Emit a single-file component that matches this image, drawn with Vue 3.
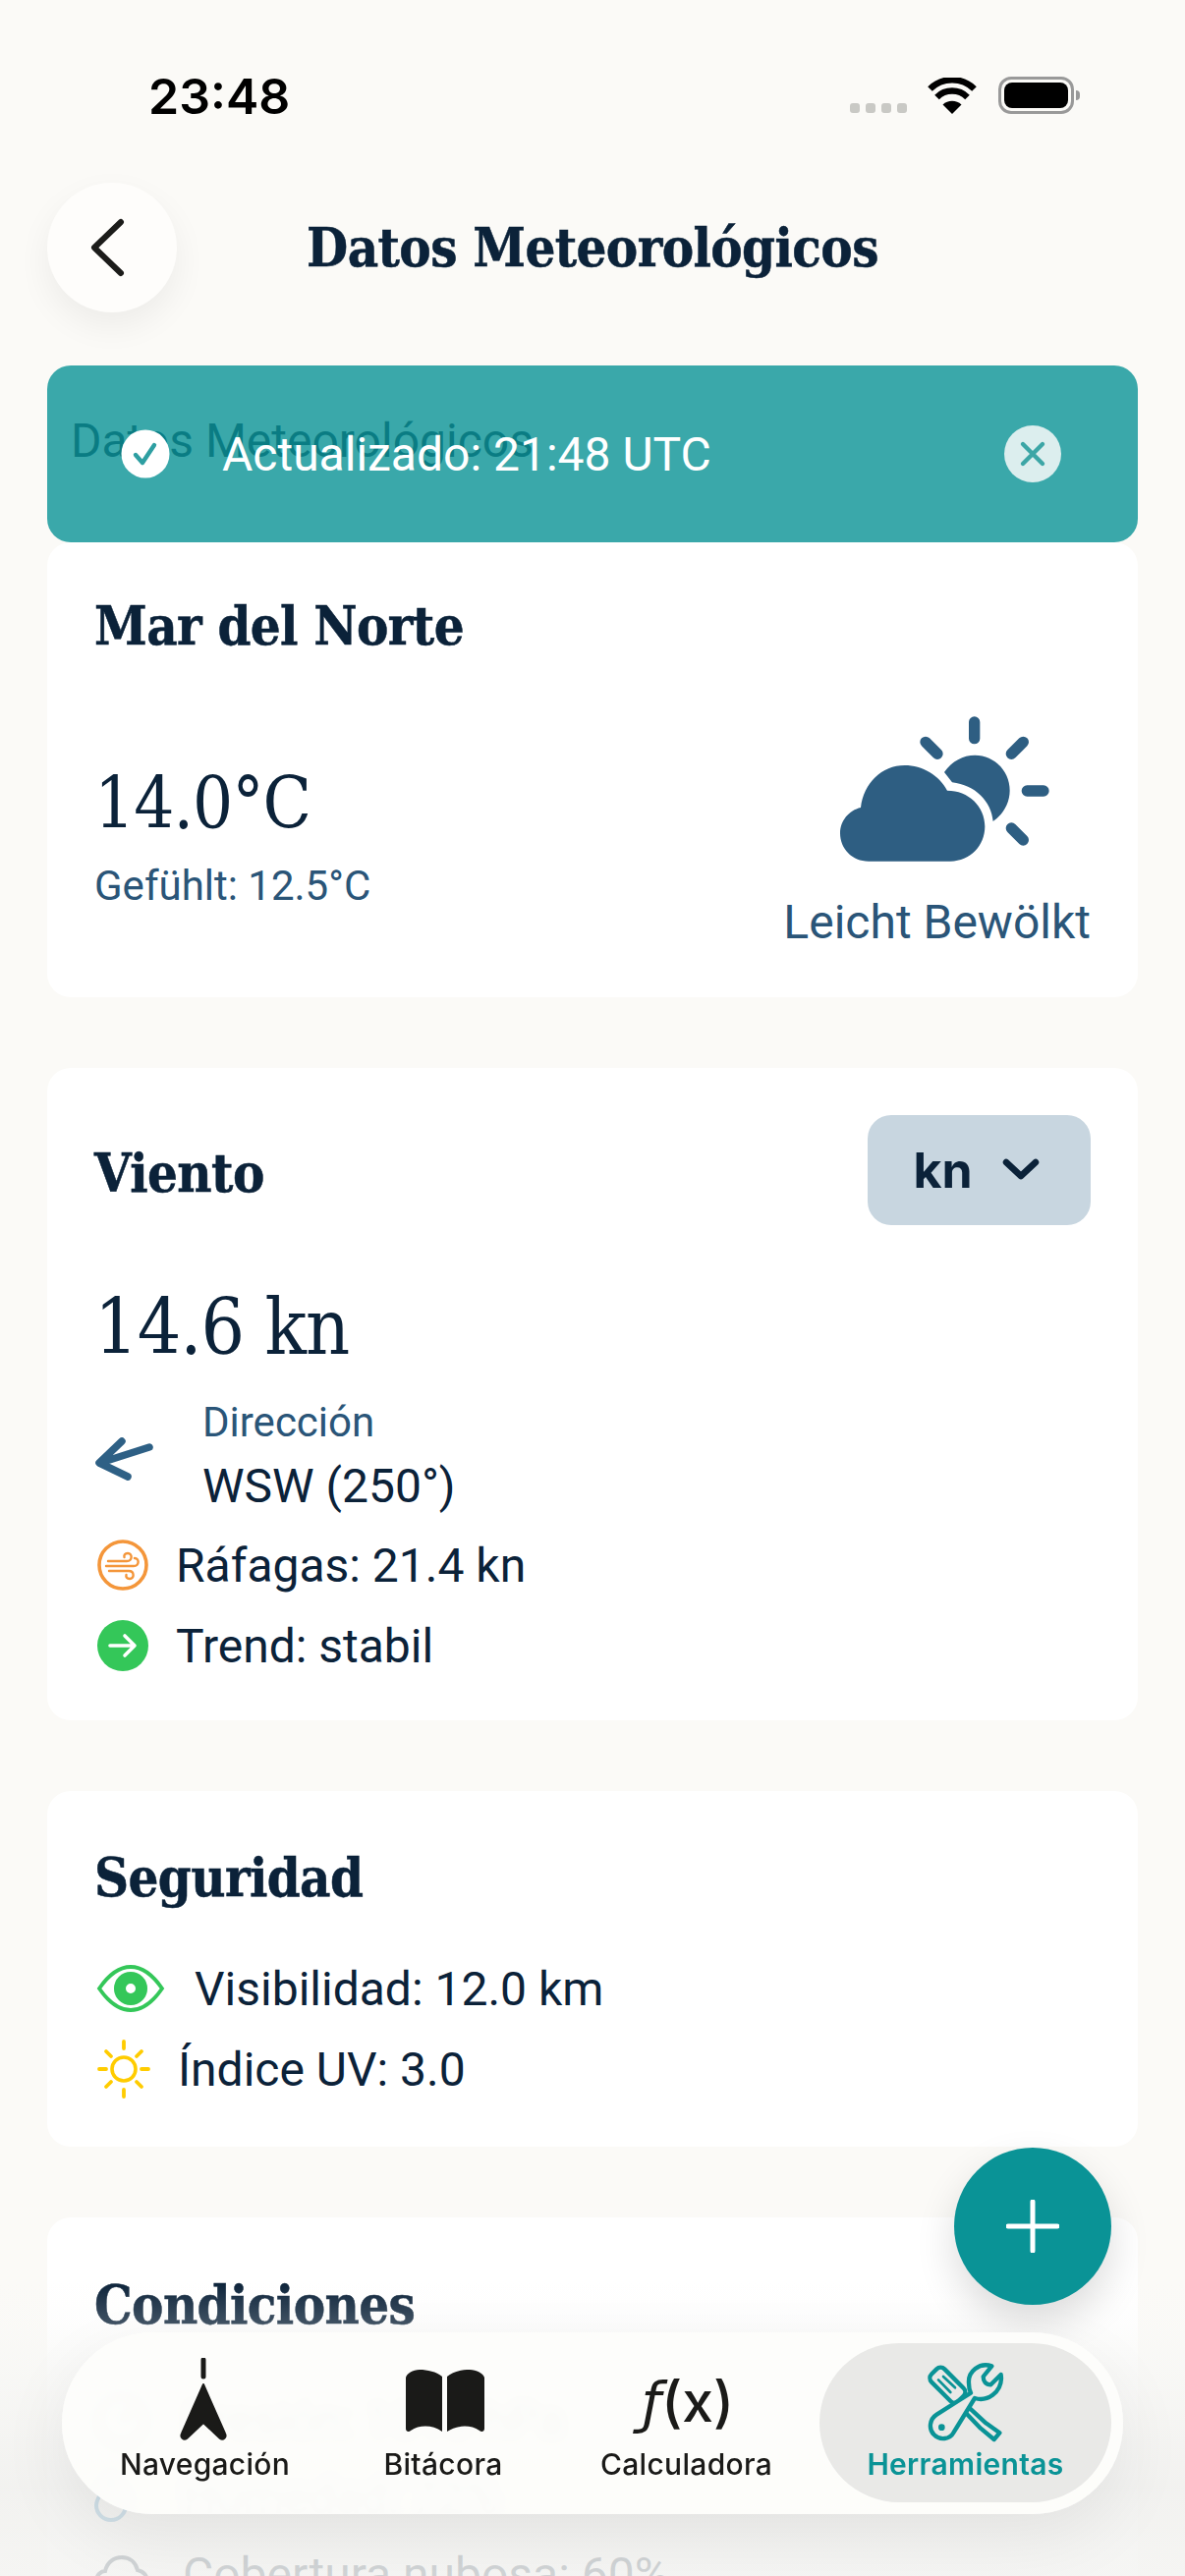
<script setup>
const navItems = [
  { key: 'pos', label: 'Navegación' },
  { key: 'book', label: 'Bitácora' },
  { key: 'calc', label: 'Calculadora' },
  { key: 'tools', label: 'Herramientas', active: true },
]
</script>

<template>
  <div class="page">
    <div class="status">
      <span class="time">23:48</span>
      <div class="status-icons">
        <div class="dots"><i></i><i></i><i></i><i></i></div>
        <svg class="wifi" width="50" height="37" viewBox="0 0 50 37">
          <path d="M25 37 L15.5 27.5 A14 14 0 0 1 34.5 27.5 Z" fill="#000" />
          <path d="M9.5 20 A22 22 0 0 1 40.5 20" fill="none" stroke="#000" stroke-width="6.5" />
          <path d="M2.5 11.5 A32 32 0 0 1 47.5 11.5" fill="none" stroke="#000" stroke-width="6.5" />
        </svg>
        <div class="battery"><div class="battery-fill"></div><div class="battery-nub"></div></div>
      </div>
    </div>

    <header class="header">
      <button class="back">
        <svg width="40" height="62" viewBox="0 0 40 62"><path d="M34 5 L7 31 L34 57" fill="none" stroke="#1c1c1a" stroke-width="6" stroke-linecap="round" stroke-linejoin="round" /></svg>
      </button>
      <h1 class="title slab-b">Datos Meteorológicos</h1>
    </header>

    <h2 class="page-heading">Datos Meteorológicos</h2>

    <main class="cards">
      <section class="card weather">
        <h3 class="card-title slab-b">Mar del Norte</h3>
        <div class="weather-row">
          <div class="temp-col">
            <div class="big slab-r">14.0°C</div>
            <div class="feels">Gefühlt: 12.5°C</div>
          </div>
          <div class="cond-col">
            <svg width="215" height="152" viewBox="460 122 645 456">
              <path fill="#2E5E82" d="M550 568 C500 568 463 530 463 482 C463 445 490 412 526 404 C535 330 590 275 660 275 C715 275 765 305 790 352 C855 352 905 400 905 462 C905 520 860 568 800 568 Z" />
              <path fill="#2E5E82" d="M781 296 C805 262 838 244 875 244 C933 244 981 292 981 352 C981 390 960 425 930 446 C925 385 875 335 805 327 Z" />
              <g stroke="#2E5E82" stroke-width="34" stroke-linecap="round">
                <path d="M873 143 V193 M1034 353 H1084 M724 204 L760 240 M1022 204 L986 240 M986 467 L1022 503" />
              </g>
            </svg>
            <div class="cond-label">Leicht Bewölkt</div>
          </div>
        </div>
      </section>

      <section class="card wind">
        <div class="wind-head">
          <h3 class="card-title slab-b">Viento</h3>
          <button class="unit">
            <span>kn</span>
            <svg width="38" height="24" viewBox="0 0 38 24"><path d="M4 4 L19 18 L34 4" fill="none" stroke="#0B2239" stroke-width="6.5" stroke-linecap="round" stroke-linejoin="round" /></svg>
          </button>
        </div>
        <div class="big slab-r wind-speed">14.6 kn</div>
        <div class="dir">
          <svg class="dir-icon" width="60" height="56" viewBox="0 0 60 56">
            <path d="M56 14 L6 30 M28 8 L5 30 L34 44" fill="none" stroke="#2E6085" stroke-width="7.5" stroke-linecap="round" stroke-linejoin="round" />
          </svg>
          <div>
            <div class="dir-label">Dirección</div>
            <div class="dir-value">WSW (250°)</div>
          </div>
        </div>
        <div class="row gust">
          <svg width="52" height="52" viewBox="0 0 52 52" fill="none" stroke="#F4963A">
            <circle cx="26" cy="26" r="24" stroke-width="3.6" />
            <g stroke-width="2.4" stroke-linecap="round">
              <path d="M11 22 H30 C36 22 36 14 31 14 C28 14 27 16 27.5 18" />
              <path d="M9 27 H37 C43 27 43 19 38 19" />
              <path d="M12 32 H32 C38 32 38 40 33 40 C30 40 29 38 29.5 36" />
            </g>
          </svg>
          <span>Ráfagas: 21.4 kn</span>
        </div>
        <div class="row trend">
          <svg width="52" height="52" viewBox="0 0 52 52">
            <circle cx="26" cy="26" r="26" fill="#34C759" />
            <path d="M13 26 H38 M28 16 L38 26 L28 36" fill="none" stroke="#fff" stroke-width="3.6" stroke-linecap="round" stroke-linejoin="round" />
          </svg>
          <span>Trend: stabil</span>
        </div>
      </section>

      <section class="card safety">
        <h3 class="card-title slab-b">Seguridad</h3>
        <div class="row vis">
          <svg width="70" height="50" viewBox="0 0 70 50">
            <path d="M3 25 C14 9 25 3 35 3 C45 3 56 9 67 25 C56 41 45 47 35 47 C25 47 14 41 3 25 Z" fill="none" stroke="#34C759" stroke-width="3.8" />
            <circle cx="35" cy="25" r="11" fill="none" stroke="#34C759" stroke-width="12" />
          </svg>
          <span>Visibilidad: 12.0 km</span>
        </div>
        <div class="row uv">
          <svg width="54" height="62" viewBox="0 0 54 62" fill="none" stroke="#FFCC00" stroke-linecap="round">
            <circle cx="27" cy="31" r="12" stroke-width="3.6" />
            <path stroke-width="3.8" d="M27 3 V10 M27 52 V59 M2 31 H9 M45 31 H52 M9 13 L14 18 M45 13 L40 18 M9 49 L14 44 M45 49 L40 44" />
          </svg>
          <span>Índice UV: 3.0</span>
        </div>
      </section>

      <section class="card conditions">
        <h3 class="card-title slab-b">Condiciones</h3>
        <div class="row cond-row">
          <svg width="56" height="56" viewBox="0 0 56 56" fill="none" stroke="#2E86C1" stroke-width="4">
            <circle cx="28" cy="28" r="24" />
            <path d="M28 28 L40 16" stroke-linecap="round" />
          </svg>
          <span>Presión: 1013 hPa</span>
        </div>
        <div class="row cond-row">
          <svg width="56" height="56" viewBox="0 0 56 56" fill="none" stroke="#2E86C1" stroke-width="4">
            <path d="M17 6 C24 20 32 28 32 36 A15 15 0 0 1 2 36 C2 28 10 20 17 6 Z" />
          </svg>
          <span>Humedad: 72%</span>
        </div>
        <div class="row cond-row">
          <svg width="56" height="42" viewBox="0 0 56 42" fill="none" stroke="#0B2239" stroke-width="4">
            <path d="M14 38 C6 38 2 33 2 27 C2 21 7 17 11 17 C13 8 20 3 28 3 C36 3 42 8 44 16 C50 17 54 22 54 28 C54 34 49 38 44 38 Z" />
          </svg>
          <span>Cobertura nubosa: 60%</span>
        </div>
      </section>
    </main>

    <div class="fade"></div>

    <div class="toast">
      <svg width="50" height="50" viewBox="0 0 50 50">
        <circle cx="25" cy="25" r="24.5" fill="#fff" />
        <path d="M15 26 L22 34 L34 16" fill="none" stroke="#2E9FA2" stroke-width="4.4" stroke-linecap="round" stroke-linejoin="round" />
      </svg>
      <span class="toast-text">Actualizado: 21:48 UTC</span>
      <svg class="toast-close" width="58" height="58" viewBox="0 0 58 58">
        <circle cx="29" cy="29" r="29" fill="#DCEEEE" />
        <path d="M19 19 L39 39 M39 19 L19 39" stroke="#3CA6A6" stroke-width="4.4" stroke-linecap="round" />
      </svg>
    </div>

    <button class="fab">
      <svg width="54" height="54" viewBox="0 0 54 54"><path d="M27 2 V52 M2 27 H52" stroke="#fff" stroke-width="5" stroke-linecap="round" /></svg>
    </button>

    <nav class="nav">
      <div v-for="item in navItems" :key="item.key" class="nav-item" :class="['item-' + item.key, { active: item.active }]">
        <div class="nav-icon">
          <svg v-if="item.key === 'pos'" class="icon-pos" width="54" height="84" viewBox="0 0 54 84">
            <path d="M27 2 V19" stroke="#1a1a18" stroke-width="5" stroke-linecap="round" />
            <path d="M27 27 L49 77 C51 81 47 84 44 82 L27 66 L10 82 C7 84 3 81 5 77 Z" fill="#1a1a18" stroke="#1a1a18" stroke-width="2" stroke-linejoin="round" />
          </svg>
          <svg v-else-if="item.key === 'book'" class="icon-book" width="80" height="64" viewBox="0 0 80 64">
            <path fill="#1a1a18" d="M37 7 C31 2 22 0 14 0 C7 0 1 4 0 8 V60 C0 63 3 64 5 62 C14 56 27 56 37 63 Z" />
            <path fill="#1a1a18" d="M42 7 C48 2 57 0 65 0 C72 0 79 4 80 8 V60 C80 63 77 64 75 62 C66 56 53 56 42 63 Z" />
          </svg>
          <div v-else-if="item.key === 'calc'" class="fx"><i>ƒ</i>(x)</div>
          <svg v-else width="82" height="82" viewBox="970 135 238 246" fill="none" stroke="#0A9396" stroke-width="13" stroke-linecap="round" stroke-linejoin="round">
            <rect x="-58" y="-28" width="116" height="56" rx="17" transform="translate(1033 206) rotate(45)" />
            <path stroke-width="8" d="M1005 190 L1042 228 M1020 180 L1056 214" />
            <path d="M1098 274 L1150 322 M1086 288 L1134 338 M1150 322 L1192 352 L1175 372 L1134 338" />
            <path fill="#E9E9E7" d="M1168 148 C1130 135 1095 165 1098 200 C1098 213 1100 222 1104 230 L1000 296 C978 310 974 340 992 358 C1010 376 1040 372 1052 350 L1116 246 C1155 258 1196 228 1197 186 L1196 174 L1165 205 C1150 205 1142 195 1142 180 Z" />
            <circle cx="1015" cy="335" r="6" fill="#0A9396" stroke-width="8" />
          </svg>
        </div>
        <span class="nav-label">{{ item.label }}</span>
      </div>
    </nav>
  </div>
</template>

<style>
html, body { margin: 0; background: #FBFAF7; }
</style>

<style scoped>
.page {
  position: relative;
  width: 1206px;
  height: 2622px;
  overflow: hidden;
  background: #FBFAF7;
  font-family: Roboto, "Liberation Sans", sans-serif;
  color: #0B2239;
}
.slab-b { font-family: "DejaVu Serif", "Liberation Serif", serif; font-stretch: condensed; font-weight: 700; -webkit-text-stroke: .5px currentColor; }
.slab-r { font-family: "DejaVu Serif", "Liberation Serif", serif; font-stretch: condensed; font-weight: 400; }

.status { height: 186px; display: flex; justify-content: space-between; padding: 0 113px 0 151px; box-sizing: border-box; }
.time { font-family: Inter, sans-serif; font-weight: 600; font-size: 50px; line-height: 58px; margin-top: 69px; color: #000; }
.status-icons { display: flex; align-items: flex-start; margin-top: 78px; }
.dots { display: flex; gap: 6px; margin-top: 27px; margin-right: 21px; }
.dots i { width: 10px; height: 10px; border-radius: 3px; background: #C9C9C5; }
.wifi { margin-right: 22px; margin-top: 1px; }
.battery { position: relative; width: 77px; height: 38px; border: 3.5px solid #999; border-radius: 13px; box-sizing: border-box; padding: 3px; }
.battery-fill { width: 100%; height: 100%; background: #000; border-radius: 8px; }
.battery-nub { position: absolute; right: -9px; top: 11px; width: 4px; height: 10px; background: #999; border-radius: 0 4px 4px 0; }

.header { position: relative; height: 132px; padding-left: 48px; display: flex; align-items: center; }
.back { width: 132px; height: 132px; border-radius: 50%; background: #FEFDFB; border: none; padding: 0; display: flex; align-items: center; justify-content: center; box-shadow: 0 14px 34px rgba(0,0,0,.06); }
.back svg { margin-right: 10px; }
.title { position: absolute; left: 0; right: 0; top: 0; bottom: 0; margin: 0; display: flex; align-items: center; justify-content: center; font-size: 54px; letter-spacing: -.6px; color: #0B2239; }

.page-heading { margin: 104px 0 0 72px; font-size: 48px; line-height: 54px; font-weight: 400; color: #0B2239; }

.cards { display: flex; flex-direction: column; gap: 72px; margin: 76px 48px 0; }
.card { background: #fff; border-radius: 24px; padding: 48px; box-sizing: border-box; }
.card-title { margin: 0; font-size: 54px; line-height: 62px; color: #0B2239; letter-spacing: -.6px; }

.weather { height: 463px; padding-top: 54px; }
.weather-row { display: flex; justify-content: space-between; margin-top: 60px; }
.temp-col { padding-top: 45px; }
.big { font-size: 72px; line-height: 90px; letter-spacing: -1px; color: #0B2239; }
.feels { font-size: 42px; line-height: 48px; color: #2A5578; margin-top: 15px; }
.cond-col { display: flex; flex-direction: column; align-items: center; }
.cond-col svg { margin-left: 15px; }
.cond-label { font-size: 48px; line-height: 56px; color: #2A5578; margin-top: 31px; }

.wind { padding-top: 48px; height: 664px; }
.wind-head { display: flex; justify-content: space-between; align-items: center; }
.wind-head .card-title { padding-top: 6px; }
.unit { width: 227px; height: 112px; background: #C8D6E0; border: none; border-radius: 24px; display: flex; align-items: center; justify-content: center; gap: 30px; font-family: Inter, sans-serif; font-weight: 700; font-size: 50px; color: #0B2239; padding: 0 6px 0 0; }
.big.wind-speed { margin-top: 59px; font-size: 78px; }
.dir { display: flex; align-items: center; margin-top: 26px; gap: 50px; }
.dir-icon { margin-top: 8px; }
.dir-label { font-size: 42px; line-height: 52px; color: #2A5578; }
.dir-value { font-size: 48px; line-height: 62px; color: #0B2239; margin-top: 8px; }

.row { display: flex; align-items: center; font-size: 48px; color: #0B2239; }
.gust { margin-top: 19px; gap: 28px; height: 60px; margin-left: 3px; }
.trend { margin-top: 22px; gap: 28px; height: 60px; margin-left: 3px; }

.safety { height: 362px; padding-top: 57px; }
.vis { margin-top: 52px; gap: 30px; height: 60px; margin-left: 2px; }
.uv { margin-top: 21px; gap: 28px; height: 62px; margin-left: 3px; }

.conditions { height: 600px; padding-top: 58px; }
.cond-row { gap: 34px; height: 79px; }
.cond-row:first-of-type { margin-top: 46px; }

.fade { position: absolute; left: 0; right: 0; bottom: 0; height: 300px; background: linear-gradient(to bottom, rgba(248,248,246,0) 0%, rgba(248,248,246,.22) 14%, rgba(247,247,245,.75) 30%, rgba(240,240,238,.82) 70%, rgba(244,244,242,.85) 100%); }

.toast { position: absolute; left: 48px; top: 372px; width: 1110px; height: 180px; box-sizing: border-box; background: rgba(10,147,150,.8); border-radius: 24px; display: flex; align-items: center; padding: 0 78px 0 75px; color: #fff; }
.toast-text { font-size: 48px; margin-left: 53px; flex: 1; }

.fab { position: absolute; left: 971px; top: 2186px; width: 160px; height: 160px; border-radius: 50%; border: none; background: #0A9396; display: flex; align-items: center; justify-content: center; padding: 0; box-shadow: 0 18px 40px rgba(0,0,0,.14); }

.nav { position: absolute; left: 63px; top: 2374px; width: 1080px; height: 185px; box-sizing: border-box; padding: 11px 12px 12px 12px; border-radius: 92px; background: rgba(253,253,251,.93); backdrop-filter: blur(6px); box-shadow: 0 24px 70px rgba(0,0,0,.07); display: grid; grid-template-columns: 264px 224px 271px 297px; }
.nav-item { display: flex; flex-direction: column; align-items: center; color: #1A1A18; }
.nav-item.item-pos .nav-label { margin-left: 3px; }
.nav-item.active { background: #E9E9E7; border-radius: 81px; color: #0A9396; }
.nav-item.active .nav-label { font-weight: 600; }
.nav-icon { height: 101px; display: flex; align-items: flex-end; justify-content: center; }
.icon-pos { margin-bottom: 2px; }
.icon-book { margin-bottom: 10px; margin-left: 3px; }
.nav-label { font-family: Inter, sans-serif; font-size: 30px; letter-spacing: .3px; font-weight: 500; line-height: 34px; margin-top: 5px; white-space: nowrap; }
.fx { font-family: Inter, sans-serif; font-weight: 500; font-size: 57px; line-height: 60px; color: #1a1a18; margin-bottom: 11px; margin-left: 3px; }
.fx i { font-family: "DejaVu Sans", sans-serif; font-style: italic; }
</style>
